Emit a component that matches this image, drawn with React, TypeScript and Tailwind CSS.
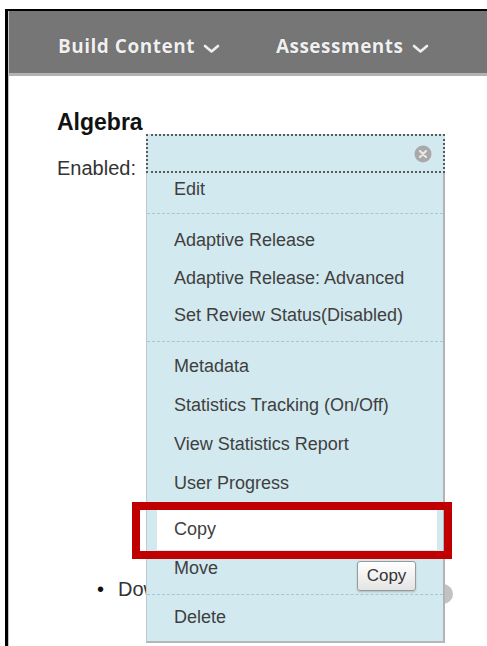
import React from "react";

const Chevron = () => (
    <svg width="17" height="10" viewBox="0 0 17 10" className="mt-[5px]">
        <polyline
            points="2,2 8.5,7.5 15,2"
            fill="none"
            stroke="#eeeeee"
            strokeWidth="2.6"
            strokeLinecap="round"
            strokeLinejoin="round"
        />
    </svg>
);

const CloseIcon = () => (
    <svg width="18" height="18" viewBox="0 0 18 18">
        <circle cx="9" cy="9" r="8.5" fill="#a9a9a9" />
        <path
            d="M6 6 L12 12 M12 6 L6 12"
            stroke="#e8e8e8"
            strokeWidth="2.2"
            strokeLinecap="round"
        />
    </svg>
);

const NavItem = ({ label }: { label: string }) => (
    <div className="flex items-center gap-[8px]">
        <span className="tracking-[0.5px] [text-shadow:0_0_1px_rgba(0,0,0,0.35)]">{label}</span>
        <Chevron />
    </div>
);

const Item = ({ label, h = "h-[37.5px]" }: { label: string; h?: string }) => (
    <div className={`${h} flex items-center pl-[27px]`}>{label}</div>
);

const Separator = () => <div className="border-t border-dashed border-[#a6c5d6]" />;

const ContextMenu = () => (
    <div className="absolute left-[146px] top-[134px] w-[299px] z-10 text-[18px] text-[#3f3f3f]">
        {/* focused title strip with the close button */}
        <div className="h-[39px] border-2 border-dotted border-[#5a5a5a] bg-[#d2e9ef] flex items-center justify-end pr-[11px]">
            <CloseIcon />
        </div>
        <div className="bg-[#d2e9ef] border-l border-[#b9ccd3] border-r-2 border-r-[#b3b3b3] border-b-2 border-b-[#b6b6b6]">
            <div className="pb-[8px]">
                <Item label="Edit" h="h-[32px]" />
            </div>
            <Separator />
            <div className="pt-[8px] pb-[6px]">
                <Item label="Adaptive Release" />
                <Item label="Adaptive Release: Advanced" />
                <Item label="Set Review Status(Disabled)" />
            </div>
            <Separator />
            <div className="pt-[5px] pb-[7px]">
                <Item label="Metadata" h="h-[39px]" />
                <Item label="Statistics Tracking (On/Off)" h="h-[39px]" />
                <Item label="View Statistics Report" h="h-[39px]" />
                <Item label="User Progress" h="h-[39px]" />
            </div>
            <div className="pb-[6px]">
                <div className="h-[40px] ml-[10px] mr-[6px] bg-white flex items-center pl-[17px]">
                    Copy
                </div>
                <Item label="Move" h="h-[38px]" />
            </div>
            <Separator />
            <div className="pt-[4px] pb-[4px]">
                <Item label="Delete" h="h-[38px]" />
            </div>
        </div>
    </div>
);

export default function App() {
    return (
        <div className="relative w-[487px] h-[646px] overflow-hidden bg-white font-['Liberation_Sans',Arial,sans-serif]">
            <div className="ml-[5px] mt-[9px] h-[637px] border-l-[3px] border-t-[2px] border-black">
                <div className="h-full border-l border-[#c4c4c4]">
                    <header className="h-[65px] bg-[#767676] border-b-[3px] border-[#b2b2b2] flex items-center pl-[49px] pt-[8px] gap-[56px] font-['Open_Sans',sans-serif] font-bold text-[19px] text-[#f0f0f0]">
                        <NavItem label="Build Content" />
                        <NavItem label="Assessments" />
                    </header>

                    <main className="pl-[48px] text-[#333]">
                        <h1 className="mt-[35px] font-bold text-[23px] leading-none text-[#111]">
                            Algebra
                        </h1>
                        <p className="mt-[24px] text-[20px] leading-none">Enabled:</p>
                        <ul className="mt-[401px] text-[20px] leading-none">
                            <li className="flex items-center ml-[40px] gap-[14px]">
                                <span className="text-[#111]">•</span>
                                <span>Download</span>
                            </li>
                        </ul>
                    </main>
                </div>
            </div>

            {/* round options button peeking out behind the menu */}
            <div className="absolute left-[433px] top-[584px] w-[20px] h-[20px] rounded-full bg-[#c2c2c2]" />

            <ContextMenu />

            {/* hover tooltip */}
            <div className="absolute z-20 left-[357px] top-[561px] w-[59px] h-[30px] rounded-[3px] border border-[#9a9a9a] bg-gradient-to-b from-white to-[#e4e4e4] shadow-[0_1px_2px_rgba(0,0,0,0.2)] flex items-center justify-center text-[17px] text-[#333]">
                Copy
            </div>

            {/* highlight around the Copy action */}
            <div className="absolute z-30 left-[132px] top-[502px] w-[320px] h-[57px] border-[8px] border-[#c00000]" />
        </div>
    );
}
